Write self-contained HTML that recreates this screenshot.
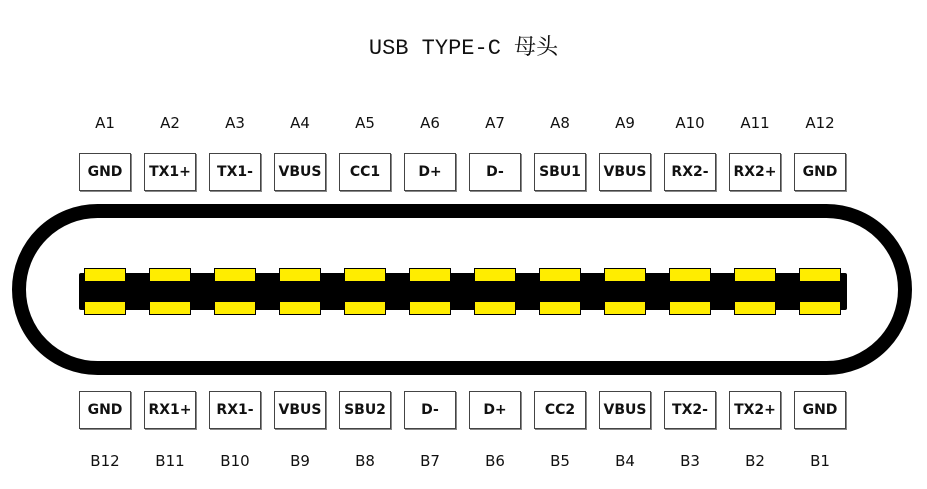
<!DOCTYPE html>
<html><head><meta charset="utf-8"><style>
body{margin:0;width:927px;height:489px;background:#fff;position:relative;overflow:hidden;font-family:"DejaVu Sans","Liberation Sans",sans-serif}
.t{position:absolute;left:0;width:927px;top:30px;text-align:center;font-family:"Liberation Mono","Noto Serif CJK SC",monospace;font-size:22px;color:#111}
.lbl{position:absolute;width:60px;text-align:center;font-size:15px;color:#111;line-height:18px}
.box{position:absolute;width:50px;height:36px;border:1px solid #444;box-shadow:1px 1px 0 #888;background:#fff;text-align:center;line-height:36px;font-size:14px;font-weight:bold;color:#111;white-space:nowrap;overflow:hidden}
.pill{position:absolute;left:12px;top:204px;width:872px;height:143px;border:14px solid #000;border-radius:86px}
.bar{position:absolute;left:79px;top:273px;width:768px;height:37px;background:#000;border-radius:2px}
.pin{position:absolute;width:40px;height:12px;background:#ffed00;border:1px solid #000}
</style></head><body>
<div class="t">USB TYPE-C 母头</div>
<div class="pill"></div>
<div class="bar"></div>
<div id="c"></div>
<script>
var tp=["GND","TX1+","TX1-","VBUS","CC1","D+","D-","SBU1","VBUS","RX2-","RX2+","GND"];
var bt=["GND","RX1+","RX1-","VBUS","SBU2","D-","D+","CC2","VBUS","TX2-","TX2+","GND"];
var h="";
for(var i=0;i<12;i++){var cx=105+i*65;
h+='<div class="lbl" style="left:'+(cx-30)+'px;top:114px">A'+(i+1)+'</div>';
h+='<div class="box" style="left:'+(cx-26)+'px;top:153px">'+tp[i]+'</div>';
h+='<div class="box" style="left:'+(cx-26)+'px;top:391px">'+bt[i]+'</div>';
h+='<div class="lbl" style="left:'+(cx-30)+'px;top:452px">B'+(12-i)+'</div>';
h+='<div class="pin" style="left:'+(cx-21)+'px;top:268px"></div>';
h+='<div class="pin" style="left:'+(cx-21)+'px;top:301px"></div>';}
document.getElementById("c").innerHTML=h;
</script>
</body></html>
